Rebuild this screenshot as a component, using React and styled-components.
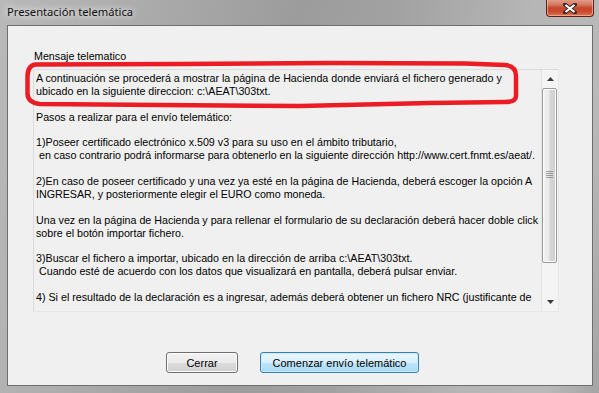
import React from "react";
import styled, { createGlobalStyle } from "styled-components";

const Global = createGlobalStyle`
  html, body { margin: 0; padding: 0; background: #b4b4b4; }
  * { box-sizing: border-box; }
`;

const Window = styled.div`
  position: relative;
  width: 599px;
  height: 393px;
  display: flex;
  flex-direction: column;
  padding: 0 6px 7px 7px;
  background: linear-gradient(100deg, #b9b9b9 0%, #a9a9a9 25%, #9c9c9c 45%, #a2a2a2 60%, #b6b6b6 80%, #b9b9b9 92%, #a4a4a4 100%);
  overflow: hidden;
`;

const TitleBar = styled.div`
  height: 25px;
  display: flex;
  align-items: flex-start;
  flex-shrink: 0;
`;

const Title = styled.div`
  font-family: "Noto Sans", "Open Sans", sans-serif;
  font-size: 11.2px;
  line-height: 16px;
  margin-top: 4px;
  color: #111;
  text-shadow: 0 0 6px rgba(255,255,255,0.9), 0 0 10px rgba(255,255,255,0.7);
`;

const CloseButton = styled.div`
  margin-left: auto;
  margin-right: -1px;
  margin-top: -2px;
  width: 48px;
  height: 19px;
  border: 1px solid #5c2218;
  border-top: none;
  border-radius: 0 0 4px 4px;
  background: linear-gradient(#e8a796 0%, #d77f68 35%, #c6472c 55%, #c94a2e 75%, #e0734f 100%);
  box-shadow: inset 0 0 0 1px rgba(255,210,195,0.55);
  display: flex;
  align-items: center;
  justify-content: center;
  padding-top: 2px;
`;

const Client = styled.div`
  flex: 1;
  background: #f0f0f0;
  border: 1px solid #6e6e6e;
  display: flex;
  flex-direction: column;
  padding: 24px 0 0 25px;
`;

const Label = styled.div`
  font-family: "Liberation Sans", Arial, sans-serif;
  font-size: 10.7px;
  line-height: 13px;
  color: #000;
  margin-left: 1px;
`;

const TextBox = styled.div`
  margin-top: 6px;
  width: 526px;
  height: 243px;
  border: 1px solid #dcdcdc;
  border-right-color: #e8e8e8;
  border-bottom-color: #e8e8e8;
  background: #f0f0f0;
  display: flex;
`;

const TextArea = styled.div`
  flex: 1;
  min-width: 0;
  padding: 2px 0 0 2px;
  font-family: "Liberation Sans", Arial, sans-serif;
  font-size: 10.7px;
  line-height: 12.9px;
  color: #000;
  white-space: pre;
  overflow: hidden;
`;

const Line = styled.div`
  height: 12.9px;
`;

const ScrollBar = styled.div`
  width: 17px;
  flex-shrink: 0;
  display: flex;
  flex-direction: column;
  background: #f4f4f4;
  border-left: 1px solid #e4e4e4;
`;

const Arrow = styled.div`
  height: 18px;
  display: flex;
  align-items: center;
  justify-content: center;
`;

const Track = styled.div`
  flex: 1;
  display: flex;
  flex-direction: column;
`;

const Thumb = styled.div`
  height: 175px;
  margin: 0 1px 0 0;
  border: 1px solid #9b9b9b;
  border-radius: 2px;
  background: linear-gradient(90deg, #f3f3f3 0%, #e9e9e9 45%, #d6d6d6 55%, #cfcfcf 100%);
  box-shadow: inset 0 0 0 1px #fafafa;
  display: flex;
  align-items: center;
  justify-content: center;
`;

const Grip = styled.div`
  width: 7px;
  height: 7px;
  background: repeating-linear-gradient(#8a8a8a 0 1px, transparent 1px 2px);
  opacity: 0.8;
  margin-top: -3px;
`;

const ButtonRow = styled.div`
  display: flex;
  gap: 22px;
  margin-top: 40px;
  margin-left: 133px;
`;

const Button = styled.div`
  width: ${(p) => p.$w}px;
  height: 21px;
  border: 1px solid ${(p) => (p.$default ? "#3c7fb1" : "#707070")};
  border-radius: 3px;
  background: ${(p) =>
    p.$default
      ? "linear-gradient(#eaf6fd 0%, #d9f0fc 50%, #bee6fd 50%, #a7d9f5 100%)"
      : "linear-gradient(#f2f2f2 0%, #ebebeb 50%, #dddddd 50%, #cfcfcf 100%)"};
  box-shadow: inset 0 0 0 1px ${(p) => (p.$default ? "#c8ebfb" : "#fcfcfc")};
  display: flex;
  align-items: center;
  justify-content: center;
  font-family: "Liberation Sans", Arial, sans-serif;
  font-size: 11px;
  color: #000;
`;

const Overlay = styled.svg`
  position: absolute;
  left: 0;
  top: 0;
  pointer-events: none;
`;

const lines = [
  "A continuación se procederá a mostrar la página de Hacienda donde enviará el fichero generado y",
  "ubicado en la siguiente direccion: c:\\AEAT\\303txt.",
  "",
  "Pasos a realizar para el envío telemático:",
  "",
  "1)Poseer certificado electrónico x.509 v3 para su uso en el ámbito tributario,",
  " en caso contrario podrá informarse para obtenerlo en la siguiente dirección http://www.cert.fnmt.es/aeat/.",
  "",
  "2)En caso de poseer certificado y una vez ya esté en la página de Hacienda, deberá escoger la opción A",
  "INGRESAR, y posteriormente elegir el EURO como moneda.",
  "",
  "Una vez en la página de Hacienda y para rellenar el formulario de su declaración deberá hacer doble click",
  "sobre el botón importar fichero.",
  "",
  "3)Buscar el fichero a importar, ubicado en la dirección de arriba c:\\AEAT\\303txt.",
  " Cuando esté de acuerdo con los datos que visualizará en pantalla, deberá pulsar enviar.",
  "",
  "4) Si el resultado de la declaración es a ingresar, además deberá obtener un fichero NRC (justificante de",
];

export default function App() {
  return (
    <>
      <Global />
      <Window>
        <TitleBar>
          <Title>Presentación telemática</Title>
          <CloseButton>
            <svg width="14" height="11" viewBox="0 0 14 11">
              <path d="M2 1.5 L12 9.5 M12 1.5 L2 9.5" stroke="#3a2a28" strokeWidth="4" strokeLinecap="square" />
              <path d="M2.5 2 L11.5 9 M11.5 2 L2.5 9" stroke="#ffffff" strokeWidth="2.2" />
            </svg>
          </CloseButton>
        </TitleBar>
        <Client>
          <Label>Mensaje telematico</Label>
          <TextBox>
            <TextArea>
              {lines.map((l, i) => (
                <Line key={i}>{l}</Line>
              ))}
            </TextArea>
            <ScrollBar>
              <Arrow>
                <svg width="7" height="4" viewBox="0 0 7 4">
                  <path d="M0 4 L3.5 0 L7 4 Z" fill="#3c3c3c" />
                </svg>
              </Arrow>
              <Track>
                <Thumb>
                  <Grip />
                </Thumb>
              </Track>
              <Arrow>
                <svg width="7" height="4" viewBox="0 0 7 4">
                  <path d="M0 0 L3.5 4 L7 0 Z" fill="#3c3c3c" />
                </svg>
              </Arrow>
            </ScrollBar>
          </TextBox>
          <ButtonRow>
            <Button $w={72}>Cerrar</Button>
            <Button $w={159} $default>
              Comenzar envío telemático
            </Button>
          </ButtonRow>
        </Client>
        <Overlay width="599" height="393" viewBox="0 0 599 393">
          <path
            d="M36 64.5 L180 64 L330 63 L465 63.5 L505 65 Q516 66 516 76 L516 96 Q516 102 505 102 L430 103 L300 106 L160 105 L40 104 Q28 103 27.5 94 L27.5 76 Q28 65 36 64.5 Z"
            fill="none"
            stroke="#ec1c24"
            strokeWidth="4.5"
            strokeLinejoin="round"
          />
        </Overlay>
      </Window>
    </>
  );
}
